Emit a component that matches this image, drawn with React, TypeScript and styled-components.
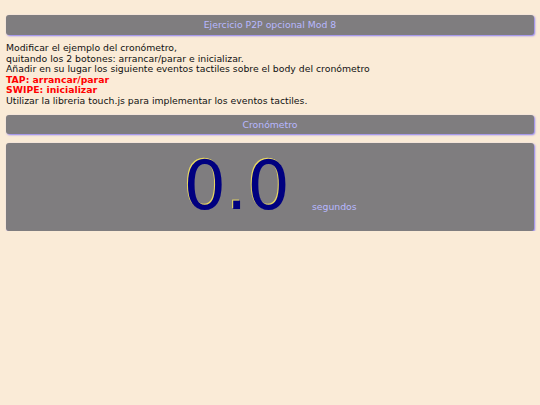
import React from 'react';
import styled, { createGlobalStyle } from 'styled-components';

const BG = '#faebd7';
const BAR = '#7f7d7f';
const LAVENDER = '#b8b8ff';

const GlobalStyle = createGlobalStyle`
  html, body {
    margin: 0;
    padding: 0;
    background: ${BG};
  }
  body {
    font-family: "DejaVu Sans", sans-serif;
  }
`;

const Page = styled.div`
  padding: 15px 6px 0 6px;
`;

const Bar = styled.div<{ $h?: number }>`
  background: ${BAR};
  color: ${LAVENDER};
  border-radius: 3px;
  box-shadow: 1px 1px 2px #8a7cf0;
  text-align: center;
  font-size: 9.3px;
  height: ${(p) => p.$h ?? 20}px;
  line-height: ${(p) => p.$h ?? 20}px;
`;

const Intro = styled.div`
  font-size: 9.3px;
  line-height: 10.6px;
  color: #111;
  padding: 8px 0 8px 0;
`;

const Red = styled.div`
  color: #ff0000;
  font-weight: bold;
`;

const Panel = styled.div`
  margin-top: 9px;
  background: ${BAR};
  border-radius: 3px;
  box-shadow: 1px 1px 2px #8a7cf0;
  height: 88px;
  box-sizing: border-box;
  display: flex;
  justify-content: center;
  align-items: center;
`;

const Display = styled.div`
  display: flex;
  align-items: flex-end;
  gap: 22px;
`;

const Value = styled.span`
  font-size: 67px;
  color: #000080;
  text-shadow: -1px -1px 0 #e8d860;
  line-height: 1;
`;

const Unit = styled.span`
  font-size: 9.3px;
  line-height: 1;
  color: ${LAVENDER};
  padding-bottom: 9px;
`;

export default function App() {
  return (
    <>
      <GlobalStyle />
      <Page>
        <Bar>Ejercicio P2P opcional Mod 8</Bar>
        <Intro>
          <div>Modificar el ejemplo del cronómetro,</div>
          <div>quitando los 2 botones: arrancar/parar e inicializar.</div>
          <div>Añadir en su lugar los siguiente eventos tactiles sobre el body del cronómetro</div>
          <Red>TAP: arrancar/parar</Red>
          <Red>SWIPE: inicializar</Red>
          <div>Utilizar la libreria touch.js para implementar los eventos tactiles.</div>
        </Intro>
        <Bar $h={19}>Cronómetro</Bar>
        <Panel>
          <Display>
            <Value>0.0</Value>
            <Unit>segundos</Unit>
          </Display>
        </Panel>
      </Page>
    </>
  );
}
